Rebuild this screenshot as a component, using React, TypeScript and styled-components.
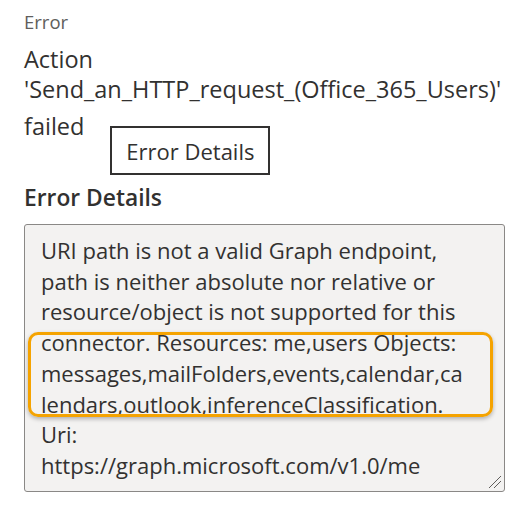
import React from "react";
import styled, { createGlobalStyle } from "styled-components";

const Global = createGlobalStyle`
  html, body { margin: 0; padding: 0; background: #ffffff; }
  body { font-family: "Open Sans", "Noto Sans", sans-serif; color: #323130; }
`;

const Page = styled.div`
  width: 520px;
  height: 506px;
  box-sizing: border-box;
  padding: 10px 15px 0 24px;
  display: flex;
  flex-direction: column;
`;

const Label = styled.div`
  font-size: 18.5px;
  line-height: 24px;
  color: #605e5c;
`;

const Message = styled.div`
  margin-top: 10px;
  font-size: 23.5px;
  line-height: 30px;
  color: #323130;
`;

const Line = styled.div`
  white-space: nowrap;
`;

const FailedRow = styled.div`
  margin-top: 7px;
  display: flex;
  align-items: flex-start;
  gap: 26px;
`;

const DetailsButton = styled.button`
  margin-top: 15px;
  height: 49px;
  width: 160px;
  box-sizing: border-box;
  border: 2px solid #323130;
  background: #ffffff;
  color: #323130;
  font-family: inherit;
  font-size: 22px;
  padding: 0;
  border-radius: 0;
`;

const Heading = styled.div`
  margin-top: 8px;
  font-size: 22.8px;
  line-height: 30px;
  font-weight: 600;
  color: #323130;
`;

const Field = styled.div`
  position: relative;
  margin-top: 11px;
  width: 481px;
  height: 268px;
  box-sizing: border-box;
  border: 1px solid #8a8886;
  border-radius: 3px;
  background: #f3f2f1;
  padding: 10px 6px 0 16px;
  font-size: 22px;
  line-height: 30.7px;
  color: #323130;
`;

const Highlight = styled.div`
  position: absolute;
  left: 3px;
  top: 107px;
  width: 465px;
  height: 85px;
  box-sizing: border-box;
  border: 3px solid #f5a300;
  border-radius: 10px;
  box-shadow: 0 2px 4px rgba(0, 0, 0, 0.28);
  pointer-events: none;
`;

const Grip = styled.svg`
  position: absolute;
  right: 2px;
  bottom: 2px;
`;

const lines = [
  "URI path is not a valid Graph endpoint,",
  "path is neither absolute nor relative or",
  "resource/object is not supported for this",
  "connector. Resources: me,users Objects:",
  "messages,mailFolders,events,calendar,ca",
  "lendars,outlook,inferenceClassification.",
  "Uri:",
  "https://graph.microsoft.com/v1.0/me",
];

export default function App() {
  return (
    <>
      <Global />
      <Page>
        <Label>Error</Label>
        <Message>
          <Line>Action</Line>
          <Line>'Send_an_HTTP_request_(Office_365_Users)'</Line>
          <FailedRow>
            <Line>failed</Line>
            <DetailsButton>Error Details</DetailsButton>
          </FailedRow>
        </Message>
        <Heading>Error Details</Heading>
        <Field>
          {lines.map((l, i) => (
            <Line key={i}>{l}</Line>
          ))}
          <Highlight />
          <Grip width="14" height="14" viewBox="0 0 14 14">
            <path d="M1 13 L13 1 M6 13 L13 6" stroke="#605e5c" strokeWidth="1" fill="none" />
          </Grip>
        </Field>
      </Page>
    </>
  );
}
